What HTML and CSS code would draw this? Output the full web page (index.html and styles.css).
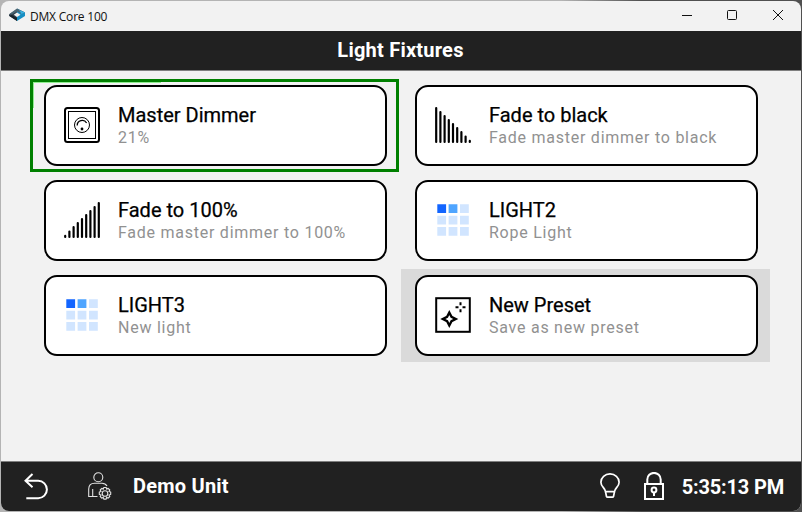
FILE: index.html
```html
<!DOCTYPE html>
<html lang="en">
<head>
<meta charset="utf-8">
<title>DMX Core 100</title>
<link rel="stylesheet" href="styles.css">
</head>
<body>
<div class="window">
  <div class="titlebar">
    <svg class="logo" width="16" height="14" viewBox="0 0 16 14">
      <path d="M0 6.5 8 1V4.4L4.8 6.7 8 9v4L0 7.8Z" fill="#34444f"/>
      <path d="M8 0.6 16 4.5V8L8 13V9L11.5 6.7 8 4.4Z" fill="#168fc4"/>
      <path d="M8 0.6 16 4.5 13 6 8 3.4 3 6.3 0 6.3Z" fill="#4a6572"/>
      <path d="M10 2 16 4.5 12.5 6Z" fill="#36b3e6"/>
      <path d="M0 7.8 3 7 8 10 8 13Z" fill="#18232b"/>
    </svg>
    <span class="app-name">DMX Core 100</span>
    <div class="controls">
      <svg width="12" height="12" viewBox="0 0 12 12"><path d="M1 6.5H11"/></svg>
      <svg width="12" height="12" viewBox="0 0 12 12"><rect x="1.5" y="1.5" width="9" height="9" rx="1"/></svg>
      <svg width="12" height="12" viewBox="0 0 12 12"><path d="M1 1 11 11M11 1 1 11"/></svg>
    </div>
  </div>
  <header class="header">Light Fixtures</header>
  <main class="grid">
    <div class="cell focused">
      <div class="card">
        <svg class="icon" viewBox="0 0 36 36" fill="none" stroke="#000">
          <rect x="1" y="1" width="34" height="34" rx="2.5" stroke-width="2"/>
          <rect x="4.5" y="4.5" width="27" height="27"/>
          <circle cx="18" cy="18" r="7.5"/>
          <path d="M13.2 18.5A5 5 0 0 1 22.6 16" stroke-width="1.3"/>
          <circle cx="18" cy="22" r="1.4" fill="#000" stroke="none"/>
        </svg>
        <div class="text"><div class="name">Master Dimmer</div><div class="detail">21%</div></div>
      </div>
    </div>
    <div class="cell">
      <div class="card">
        <svg class="icon" viewBox="0 0 36 36" fill="none" stroke="#000" stroke-width="2.2" stroke-linecap="round">
          <path d="M1.2 1.1V34.9M5.4 5V34.9M9.6 9V34.9M13.8 13V34.9M18 17V34.9M22.2 21.1V34.9M26.4 25.2V34.9M30.6 29.5V34.9M34.8 33.9V34.9"/>
        </svg>
        <div class="text"><div class="name">Fade to black</div><div class="detail">Fade master dimmer to black</div></div>
      </div>
    </div>
    <div class="cell">
      <div class="card">
        <svg class="icon" viewBox="0 0 36 36" fill="none" stroke="#000" stroke-width="2.2" stroke-linecap="round">
          <path d="M34.8 1.1V34.9M30.6 5V34.9M26.4 9V34.9M22.2 13V34.9M18 17V34.9M13.8 21.1V34.9M9.6 25.2V34.9M5.4 29.5V34.9M1.2 33.9V34.9"/>
        </svg>
        <div class="text"><div class="name">Fade to 100%</div><div class="detail">Fade master dimmer to 100%</div></div>
      </div>
    </div>
    <div class="cell">
      <div class="card">
        <svg class="icon" viewBox="0 0 36 36" fill="#d1e5ff">
          <path d="M25 2.3h8.8v8.8H25ZM2.3 13.8h8.8v8.8H2.3ZM13.6 13.8h8.8v8.8h-8.8ZM25 13.8h8.8v8.8H25ZM2.3 25h8.8v8.8H2.3ZM13.6 25h8.8v8.8h-8.8ZM25 25h8.8v8.8H25Z"/>
          <path d="M2.3 2.3h8.8v8.8H2.3Z" fill="#1265ff"/>
          <path d="M13.6 2.3h8.8v8.8h-8.8Z" fill="#4fa5ff"/>
        </svg>
        <div class="text"><div class="name">LIGHT2</div><div class="detail">Rope Light</div></div>
      </div>
    </div>
    <div class="cell">
      <div class="card">
        <svg class="icon" viewBox="0 0 36 36" fill="#d1e5ff">
          <path d="M25 2.3h8.8v8.8H25ZM2.3 13.8h8.8v8.8H2.3ZM13.6 13.8h8.8v8.8h-8.8ZM25 13.8h8.8v8.8H25ZM2.3 25h8.8v8.8H2.3ZM13.6 25h8.8v8.8h-8.8ZM25 25h8.8v8.8H25Z"/>
          <path d="M2.3 2.3h8.8v8.8H2.3Z" fill="#1265ff"/>
          <path d="M13.6 2.3h8.8v8.8h-8.8Z" fill="#4fa5ff"/>
        </svg>
        <div class="text"><div class="name">LIGHT3</div><div class="detail">New light</div></div>
      </div>
    </div>
    <div class="cell hovered">
      <div class="card">
        <svg class="icon" viewBox="0 0 36 36" fill="none" stroke="#000" stroke-width="2">
          <rect x="1.2" y="1.2" width="33.6" height="33.6"/>
          <path d="M14.3 15.5 16.5 19.8 20.8 22 16.5 24.2 14.3 28.5 12.1 24.2 7.8 22 12.1 19.8Z" stroke-width="2.3"/>
          <path d="M25.5 5.2V8.2M25.5 12.2V15.2M20.5 10.2H23.5M27.5 10.2H30.5"/>
        </svg>
        <div class="text"><div class="name">New Preset</div><div class="detail">Save as new preset</div></div>
      </div>
    </div>
  </main>
  <footer class="footer">
    <svg class="back" width="26" height="28" viewBox="0 0 26 28" fill="none" stroke="#fff" stroke-width="2">
      <path d="M8.5 2 1.5 8.8 8.5 15.3M1.5 8.8H14.2A8.7 8.7 0 0 1 14.2 26.2H2.3"/>
    </svg>
    <svg class="user" width="24" height="28" viewBox="0 0 24 28" fill="none" stroke="#e2e2e2" stroke-width="1.1">
      <circle cx="10.3" cy="5.2" r="4.5"/>
      <path d="M9.5 24.5H.7V17Q.9 11.2 6.5 11.2H14Q17.5 11.2 19 14M4.7 17V24.5"/>
      <circle cx="17" cy="21.5" r="2.8"/>
      <path d="M15.8 15.5h2.4l.4 1.7 1.5-.9 1.7 1.7-.9 1.5 1.8.6v2.4l-1.8.5.9 1.5-1.7 1.7-1.5-.9-.4 1.8h-2.4l-.5-1.8-1.5.9-1.6-1.7.9-1.5-1.8-.5v-2.4l1.8-.6-.9-1.5 1.6-1.7 1.5.9Z" stroke-linejoin="round"/>
    </svg>
    <span class="unit">Demo Unit</span>
    <svg class="bulb" width="20" height="26" viewBox="0 0 20 26" fill="none" stroke="#fff" stroke-width="1.7">
      <path d="M5.5 18.7C5.3 15 .9 14 .9 9.2A9.1 8.3 0 0 1 19.1 9.2C19.1 14 14.7 15 14.5 18.7ZM5.5 18.7 6.5 23.5Q6.7 24.2 7.5 24.2H12.5Q13.3 24.2 13.5 23.5L14.5 18.7"/>
    </svg>
    <svg class="lock" width="20" height="28" viewBox="0 0 20 28" fill="none" stroke="#fff" stroke-width="2">
      <rect x="1" y="12" width="18" height="15"/>
      <path d="M3.3 11.5V7.5A6.7 6.6 0 0 1 16.7 7.5V11.5"/>
      <circle cx="10" cy="18" r="2.4"/><path d="M10 20V24"/>
    </svg>
    <span class="clock">5:35:13 PM</span>
  </footer>
</div>
</body>
</html>
```
FILE: styles.css
```css
* { box-sizing: border-box; }
body {
  margin: 0;
  height: 512px;
  padding: 1px;
  background: linear-gradient(90deg, #b4b4b4 0 70%, #505050 80%);
  font-family: Roboto, "Liberation Sans", sans-serif;
  overflow: hidden;
}
svg { display: block; flex: none; }
.window {
  height: 510px;
  display: flex;
  flex-direction: column;
  background: #f2f2f2;
  border-radius: 8px;
  overflow: hidden;
}
.titlebar {
  height: 30px;
  flex: none;
  display: flex;
  align-items: center;
  padding: 0 17px 2px 8px;
}
.app-name {
  margin: 2px 0 0 5px;
  font: 12px "Open Sans", "Noto Sans", sans-serif;
  letter-spacing: -0.2px;
  color: #111;
}
.controls {
  margin-left: auto;
  display: grid;
  grid-template-columns: 45px 46px 12px;
  fill: none;
  stroke: #111;
}
.header {
  height: 40px;
  flex: none;
  padding-right: 1px;
  background: #212121;
  border-bottom: 1px solid #7f7f7f;
  color: #fff;
  font-size: 20px;
  font-weight: 700;
  line-height: 38px;
  letter-spacing: 0.23px;
  text-align: center;
}
.grid {
  flex: 1;
  display: grid;
  grid-template-columns: 369px 369px;
  grid-auto-rows: 93px;
  gap: 2px;
  padding: 8px 0 0 29px;
}
.cell { padding: 6px 12px 6px 14px; }
.focused {
  box-shadow: inset 0 0 0 3px #008000;
  background:
    linear-gradient(#90ee90, #90ee90) 3px 3px / 128px 1px no-repeat,
    linear-gradient(#90ee90, #90ee90) 3px 3px / 1px 26px no-repeat;
}
.hovered { background: #dadada; }
.card {
  height: 81px;
  display: flex;
  align-items: center;
  padding: 0 0 1px 18px;
  background: #fff;
  border: 2px solid #000;
  border-radius: 13px;
}
.icon { width: 36px; height: 36px; }
.text { margin-left: 18px; white-space: nowrap; }
.name {
  font-size: 20px;
  line-height: 24px;
  color: #000;
  -webkit-text-stroke: 0.25px #000;
}
.detail { font-size: 16px; line-height: 21px; letter-spacing: 0.75px; color: #919191; }
.footer {
  height: 50px;
  flex: none;
  display: flex;
  align-items: center;
  padding: 0 17px 1px 23px;
  background: #212121;
  border-top: 1px solid #7f7f7f;
  color: #fff;
  font-size: 20px;
  font-weight: 700;
}
.user { margin-left: 38px; }
.unit { margin-left: 21px; letter-spacing: 0.22px; }
.bulb { margin-left: auto; }
.lock { margin-left: 24px; }
.clock { margin-left: 18px; letter-spacing: -0.18px; position: relative; top: 1px; }
```
